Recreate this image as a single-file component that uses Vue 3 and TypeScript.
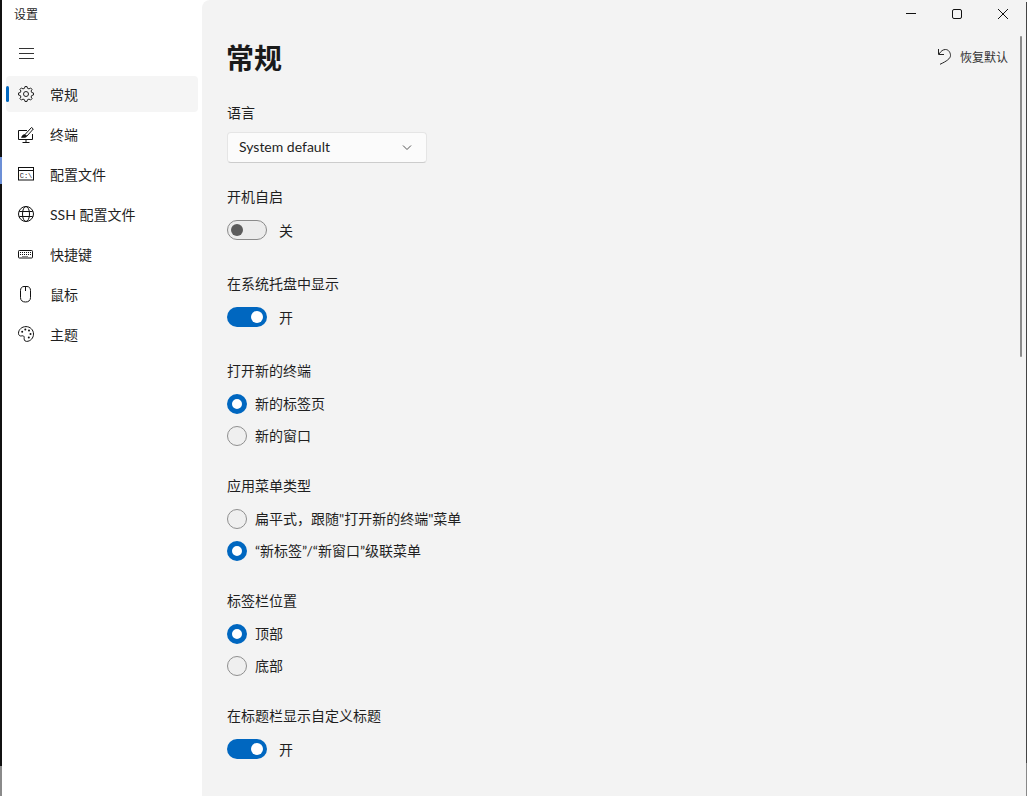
<script setup lang="ts">
interface NavItem { key: string; label: string }
const nav: NavItem[] = [
  { key: 'general', label: '常规' },
  { key: 'terminal', label: '终端' },
  { key: 'profile', label: '配置文件' },
  { key: 'ssh', label: 'SSH 配置文件' },
  { key: 'keys', label: '快捷键' },
  { key: 'mouse', label: '鼠标' },
  { key: 'theme', label: '主题' },
]

function gearPath(): string {
  const teeth = 8
  const pts: string[] = []
  for (let i = 0; i < teeth; i++) {
    const c = (i / teeth) * Math.PI * 2
    const step = (Math.PI * 2) / teeth
    const seq: [number, number][] = [
      [5.9, c - step * 0.32],
      [7.6, c - step * 0.17],
      [7.6, c + step * 0.17],
      [5.9, c + step * 0.32],
    ]
    for (const [r, a] of seq) {
      pts.push(`${(8 + r * Math.cos(a)).toFixed(2)} ${(8 + r * Math.sin(a)).toFixed(2)}`)
    }
  }
  return 'M' + pts.join('L') + 'Z'
}
const gear = gearPath()
</script>

<template>
  <div class="window">
    <div class="edge"></div>
    <aside class="sidebar">
      <div class="app-title">设置</div>
      <button class="hamburger" aria-label="menu">
        <svg width="16" height="16" viewBox="0 0 16 16" fill="none" stroke="#333" stroke-width="1">
          <path d="M1 2.500h15M1 7.500h15M1 12.500h15" />
        </svg>
      </button>
      <nav class="nav">
        <div v-for="(item, i) in nav" :key="item.key" class="nav-item" :class="{ active: i === 0 }">
          <span v-if="i === 0" class="indicator"></span>
          <span class="nav-icon">
            <svg v-if="item.key === 'general'" width="16" height="16" viewBox="0 0 16 16" fill="none" stroke="#222" stroke-width="1">
              <circle cx="8" cy="8" r="2.500" />
              <path :d="gear" />
            </svg>
            <svg v-else-if="item.key === 'terminal'" width="16" height="17" viewBox="0 0 16 17" fill="none" stroke="#111" stroke-width="1">
              <path d="M9 4.500H.5v9h14V8" />
              <path d="M4.500 16.500h7M8 13.500v3" />
              <path d="M7 8.500L13.500 1.500l1.800 1.500-6.300 7" />
              <path d="M3.500 11.500c.6-2 1.500-3 3.500-3l2 1.500c-.5 1.300-2.500 1.700-5.500 1.500z" fill="#111" stroke-width=".6" />
            </svg>
            <svg v-else-if="item.key === 'profile'" width="16" height="14" viewBox="0 0 16 14" fill="none" stroke="#111" stroke-width="1">
              <rect x=".5" y=".5" width="15" height="12.500" />
              <path d="M.5 3.500h15" />
              <text x="8" y="10.800" text-anchor="middle" font-size="7" fill="#222" stroke="none" font-family="'Liberation Mono', monospace">C:\</text>
            </svg>
            <svg v-else-if="item.key === 'ssh'" width="16" height="16" viewBox="0 0 16 16" fill="none" stroke="#111" stroke-width="1">
              <circle cx="8" cy="8" r="7.500" />
              <ellipse cx="8" cy="8" rx="3.500" ry="7.500" />
              <path d="M1.200 5.500h13.600M1.200 10.500h13.600" />
            </svg>
            <svg v-else-if="item.key === 'keys'" width="16" height="9" viewBox="0 0 16 9" fill="none" stroke="#111" stroke-width="1" class="kbd">
              <rect x=".5" y=".5" width="14" height="7.500" rx=".8" />
              <path d="M2 2.500h11M2 4.500h11M4.500 6.500h6" stroke-dasharray="1 1" />
            </svg>
            <svg v-else-if="item.key === 'mouse'" width="12" height="17" viewBox="0 0 12 17" fill="none" stroke="#111" stroke-width="1" class="mouse">
              <path d="M.5 4.500C.5 2 2 .5 4 .5h3c2 0 3.500 1.500 3.500 4v7c0 3-2 4.500-5 4.500s-5-1.500-5-4.500z" />
              <path d="M5.500 .5v4.500" />
            </svg>
            <svg v-else width="16" height="16" viewBox="0 0 16 16" fill="none" stroke="#111" stroke-width="1">
              <path d="M8 .6C3.800 .6.500 3.600.500 7.300c0 2.200 1.700 3.100 3.300 2.600 1.400-.4 2.600.3 2.400 1.600-.2 1.300-.1 3.900 2.300 3.900 4 0 7-3.400 7-7.300C15.500 3.800 12.200.6 8 .6z" />
              <g fill="#111" stroke="none">
                <circle cx="4.200" cy="5.800" r="1" />
                <circle cx="7.300" cy="3.500" r="1" />
                <circle cx="11" cy="4.500" r="1" />
                <circle cx="12.500" cy="8" r="1" />
                <circle cx="10.800" cy="11.500" r="1" />
              </g>
            </svg>
          </span>
          <span class="nav-label">{{ item.label }}</span>
        </div>
      </nav>
    </aside>

    <main class="main">
      <div class="titlebar">
        <svg width="10" height="10" viewBox="0 0 10 10" fill="none" stroke="#111" stroke-width="1"><path d="M0 4.500h10" /></svg>
        <svg width="10" height="10" viewBox="0 0 10 10" fill="none" stroke="#111" stroke-width="1"><rect x=".5" y=".5" width="9" height="9" rx="1.500" /></svg>
        <svg width="10" height="10" viewBox="0 0 10 10" fill="none" stroke="#111" stroke-width="1"><path d="M0 0l10 10M10 0L0 10" /></svg>
      </div>

      <div class="content">
        <header class="page-head">
          <h1>常规</h1>
          <button class="reset">
            <svg class="reset-icon" width="16" height="18" viewBox="0 0 16 18" fill="none" stroke="#222" stroke-width="1">
              <path d="M1.500 1v5.500H7" />
              <path d="M2 6C4 3 6 1.500 8.500 1.500c3 0 5 3 5 6 0 3-4 5.800-10.500 8.800" />
            </svg>
            <span>恢复默认</span>
          </button>
        </header>

        <section class="group lang">
          <div class="label">语言</div>
          <div class="select">
            <span class="select-text">System default</span>
            <svg width="10" height="6" viewBox="0 0 10 6" fill="none" stroke="#555" stroke-width="1"><path d="M1 .5l4 4 4-4" /></svg>
          </div>
        </section>

        <section class="group">
          <div class="label">开机自启</div>
          <div class="toggle-row"><span class="toggle off"><i></i></span><span class="state">关</span></div>
        </section>

        <section class="group">
          <div class="label">在系统托盘中显示</div>
          <div class="toggle-row"><span class="toggle on"><i></i></span><span class="state">开</span></div>
        </section>

        <section class="group radios">
          <div class="label">打开新的终端</div>
          <div class="radio-row"><span class="radio on"></span><span>新的标签页</span></div>
          <div class="radio-row"><span class="radio"></span><span>新的窗口</span></div>
        </section>

        <section class="group radios">
          <div class="label">应用菜单类型</div>
          <div class="radio-row"><span class="radio"></span><span>扁平式，跟随"打开新的终端"菜单</span></div>
          <div class="radio-row"><span class="radio on"></span><span>“新标签”/“新窗口”级联菜单</span></div>
        </section>

        <section class="group radios">
          <div class="label">标签栏位置</div>
          <div class="radio-row"><span class="radio on"></span><span>顶部</span></div>
          <div class="radio-row"><span class="radio"></span><span>底部</span></div>
        </section>

        <section class="group after-radios">
          <div class="label">在标题栏显示自定义标题</div>
          <div class="toggle-row"><span class="toggle on"><i></i></span><span class="state">开</span></div>
        </section>
      </div>

      <div class="scrollbar"></div>
    </main>
    <div class="edge-right"></div>
  </div>
</template>

<style>
html, body { margin: 0; background: #fff; overflow: hidden; }
</style>

<style scoped>
.window {
  display: flex;
  width: 1027px;
  height: 796px;
  overflow: hidden;
  font-family: "Lato", "Noto Sans CJK SC", sans-serif;
  font-size: 14px;
  line-height: 20px;
  color: #1f1f1f;
}
.edge {
  flex: 0 0 2px;
  background: linear-gradient(#111 0 157px, #6c8fd6 157px 184px, #111 184px 766px, #8a8a8a 766px);
}
.edge-right {
  flex: 0 0 1px;
  background: linear-gradient(#f3f3f3 0 2px, #444 2px 763px, #888 763px);
}
.sidebar {
  flex: 0 0 200px;
  background: #fff;
  display: flex;
  flex-direction: column;
}
.app-title {
  height: 30px;
  padding-left: 12px;
  font-size: 12px;
  line-height: 30px;
}
.hamburger {
  width: 32px;
  height: 30px;
  margin: 9px 0 0 8px;
  padding: 0;
  border: 0;
  background: none;
  display: flex;
  align-items: center;
  justify-content: center;
}
.nav {
  margin: 7px 0 0 4px;
  width: 192px;
  display: flex;
  flex-direction: column;
  gap: 4px;
}
.nav-item {
  position: relative;
  height: 36px;
  display: flex;
  align-items: center;
  border-radius: 4px;
}
.nav-item.active { background: #f5f5f5; }
.indicator {
  position: absolute;
  left: 0;
  top: 10px;
  width: 3px;
  height: 16px;
  border-radius: 2px;
  background: #0067c0;
}
.nav-icon {
  flex: 0 0 16px;
  margin-left: 12px;
  height: 18px;
  display: flex;
  align-items: center;
  justify-content: center;
}
.kbd { margin-left: -1px; }
.mouse { margin-left: -1px; }
.nav-label { margin-left: 16px; padding-top: 2px; }
.main {
  position: relative;
  flex: 1;
  background: #f3f3f3;
  border-top-left-radius: 8px;
  min-width: 0;
}
.titlebar {
  height: 28px;
  display: flex;
  justify-content: flex-end;
  align-items: center;
  gap: 36px;
  padding-right: 18px;
}
.content {
  padding: 8px 18px 0 25px;
}
.page-head {
  display: flex;
  justify-content: space-between;
  align-items: center;
  height: 44px;
}
.page-head h1 {
  margin: 0 0 0 -1px;
  font-size: 28px;
  line-height: 44px;
  font-weight: 700;
  color: #1a1a1a;
}
.reset {
  display: flex;
  align-items: center;
  gap: 7px;
  padding: 0;
  border: 0;
  background: none;
  font: inherit;
  font-size: 12px;
  color: #333;
}
.reset-icon { margin-top: -2px; }
.group { margin-top: 34px; }
.group.lang { margin-top: 23px; }
.lang + .group { margin-top: 24px; }
.radios + .radios, .group.after-radios { margin-top: 30px; }
.label { height: 20px; }
.select {
  box-sizing: border-box;
  width: 200px;
  height: 31px;
  margin-top: 9px;
  padding: 0 14px 0 11px;
  display: flex;
  align-items: center;
  justify-content: space-between;
  background: #fbfbfb;
  border: 1px solid #e5e5e5;
  border-bottom-color: #ccc;
  border-radius: 4px;
}
.select-text { padding-bottom: 2px; }
.toggle-row {
  margin-top: 13px;
  height: 20px;
  display: flex;
  align-items: center;
  gap: 12px;
}
.state { padding-top: 2px; }
.toggle {
  box-sizing: border-box;
  position: relative;
  width: 40px;
  height: 20px;
  border-radius: 10px;
  display: block;
}
.toggle i {
  position: absolute;
  top: 50%;
  width: 12px;
  height: 12px;
  margin-top: -6px;
  border-radius: 50%;
}
.toggle.off { background: #ececec; border: 1px solid #8a8a8a; }
.toggle.off i { left: 3px; background: #5c5c5c; }
.toggle.on { background: #0067c0; }
.toggle.on i { right: 4px; background: #fff; }
.radio-row {
  margin-top: 12px;
  height: 20px;
  display: flex;
  align-items: center;
  gap: 8px;
}
.label + .radio-row { margin-top: 13px; }
.radio {
  box-sizing: border-box;
  width: 20px;
  height: 20px;
  border-radius: 50%;
  background: #efefef;
  border: 1px solid #8f8f8f;
}
.radio.on {
  background: #fff;
  border: 5px solid #0067c0;
}
.scrollbar {
  position: absolute;
  top: 36px;
  right: 4px;
  width: 2px;
  height: 321px;
  background: #8a8a8a;
  border-radius: 1px;
}
</style>
